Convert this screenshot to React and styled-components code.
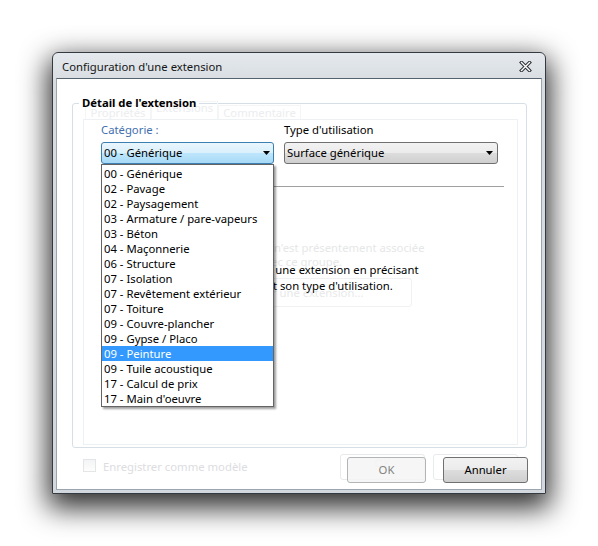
import React from "react";
import styled, { createGlobalStyle } from "styled-components";

const FS = "11.3px";

const Global = createGlobalStyle`
  html, body { margin: 0; padding: 0; background: #ffffff; }
  body {
    font-family: "Noto Sans", "Segoe UI", sans-serif;
    font-size: ${FS};
    color: #000;
  }
  * { box-sizing: border-box; }
`;

const Stage = styled.div`
  width: 598px;
  height: 546px;
  padding: 52px 0 0 52px;
  background: #fff;
  overflow: hidden;
`;

const Window = styled.div`
  width: 494px;
  height: 442px;
  border: 1px solid #343a40;
  border-radius: 6px 6px 0 0;
  background: linear-gradient(#e5e9ed, #d7dce1 30px, #d3d8de);
  box-shadow: 0 10px 28px 4px rgba(0, 0, 0, 0.82);
  display: flex;
  flex-direction: column;
  padding: 0 3px 3px 3px;
`;

const TitleBar = styled.div`
  height: 25px;
  flex: none;
  display: flex;
  align-items: center;
  justify-content: space-between;
  padding: 2px 10px 0 6px;
`;

const Title = styled.span`
  font-size: ${FS};
  line-height: 16px;
  color: #151515;
`;

const CloseGlyph = styled.svg`
  display: block;
`;

const Client = styled.div`
  flex: 1;
  min-height: 0;
  background: #fff;
  border: 1px solid #9aa5b0;
  border-top-color: #56636f;
  display: flex;
  flex-direction: column;
  padding: 16px 0 6px 0;
`;

const GroupBox = styled.fieldset`
  flex: 1;
  min-height: 0;
  margin: 0 14px 0 15px;
  padding: 0 8px 2px 10px;
  border: 1px solid #d5dfe5;
  border-radius: 3px;
  display: flex;
  flex-direction: column;
`;

const Legend = styled.legend`
  font-weight: bold;
  font-size: ${FS};
  line-height: 16px;
  padding: 0 3px;
  margin-left: -4px;
  color: #000;
  position: relative;
  z-index: 2;
`;

const TabStrip = styled.div`
  display: flex;
  align-items: flex-end;
  height: 16px;
  margin: -8px 0 0 2px;
  flex: none;
`;

const GhostTab = styled.div`
  width: ${(p) => p.$w}px;
  height: ${(p) => (p.$active ? 18 : 14)}px;
  border: 1px solid #f3f5f6;
  border-bottom: none;
  font-size: ${FS};
  line-height: ${(p) => (p.$active ? 12 : 14)}px;
  color: #ebedef;
  text-align: center;
  white-space: nowrap;
`;

const Panel = styled.div`
  flex: 1;
  min-height: 0;
  position: relative;
  border: 1px solid #eef1f3;
  padding: 2px 13px 0 17px;
  display: flex;
  flex-direction: column;
`;

const FieldGrid = styled.div`
  display: grid;
  grid-template-columns: 173px 214px;
  column-gap: 10px;
  row-gap: 4px;
  position: relative;
  z-index: 5;
`;

const FieldLabel = styled.div`
  font-size: ${FS};
  line-height: 16px;
  color: ${(p) => (p.$focus ? "#3f6fae" : "#000")};
`;

const ComboWrap = styled.div`
  position: relative;
`;

const Combo = styled.div`
  height: 22px;
  border: 1px solid ${(p) => (p.$open ? "#3c7fb1" : "#707070")};
  border-radius: 3px;
  background: ${(p) =>
    p.$open
      ? "linear-gradient(#eaf6fd 0%, #d9f0fc 50%, #bee6fd 50%, #a7d9f5 100%)"
      : "linear-gradient(#f2f2f2 0%, #ebebeb 50%, #dddddd 50%, #cfcfcf 100%)"};
  display: flex;
  align-items: center;
  justify-content: space-between;
  padding: 0 ${(p) => (p.$open ? 3 : 4)}px 0 2px;
  font-size: ${FS};
  line-height: 16px;
  white-space: nowrap;
`;

const Arrow = styled.svg`
  display: block;
  flex: none;
`;

const DropList = styled.ul`
  position: absolute;
  top: 100%;
  left: 0;
  width: 100%;
  margin: 0;
  padding: 1px 0 0 0;
  list-style: none;
  background: #fff;
  border: 1px solid #646464;
  box-shadow: 2px 2px 2px rgba(0, 0, 0, 0.38);
  z-index: 10;
`;

const DropItem = styled.li`
  height: 15px;
  line-height: 15px;
  padding-left: 2px;
  font-size: ${FS};
  white-space: nowrap;
  background: ${(p) => (p.$selected ? "#3399ff" : "transparent")};
  color: ${(p) => (p.$selected ? "#fff" : "#000")};
`;

const Separator = styled.div`
  height: 1px;
  background: #a0a0a0;
  margin-top: 22px;
  flex: none;
  position: relative;
  z-index: 2;
`;

const Description = styled.div`
  margin-top: 75px;
  margin-left: 101px;
  font-size: ${FS};
  line-height: 16px;
  color: #000;
  position: relative;
  z-index: 2;
  white-space: nowrap;
`;

const DescLine = styled.div`
  margin-left: ${(p) => p.$shift || 0}px;
`;

const GhostLayer = styled.div`
  position: absolute;
  inset: 0;
  display: flex;
  flex-direction: column;
  align-items: center;
  padding-top: 121px;
  pointer-events: none;
  z-index: 1;
`;

const GhostText = styled.div`
  font-size: ${FS};
  line-height: 14px;
  color: #e6e7e8;
  text-align: center;
  white-space: nowrap;
`;

const GhostButton = styled.div`
  margin-top: 9px;
  width: 222px;
  height: 29px;
  border: 1px solid #f0f1f2;
  border-radius: 3px;
  display: flex;
  align-items: center;
  justify-content: center;
  font-size: ${FS};
  color: #e8e9ea;
`;

const BottomRow = styled.div`
  flex: none;
  height: 26px;
  margin-top: 9px;
  padding: 0 13px 0 26px;
  display: flex;
  align-items: center;
  position: relative;
`;

const GhostActions = styled.div`
  position: absolute;
  right: 23px;
  top: -3px;
  display: flex;
  gap: 8px;
  pointer-events: none;
`;

const GhostAction = styled.div`
  width: 85px;
  height: 26px;
  border: 1px solid #e9eaeb;
  border-radius: 3px;
  font-size: ${FS};
  line-height: 16px;
  color: #e4e5e6;
  text-align: center;
`;

const CheckBox = styled.span`
  width: 13px;
  height: 13px;
  border: 1px solid #e3e5e7;
  background: linear-gradient(#f3f4f5, #fdfdfd);
  align-self: flex-start;
  margin-top: 2px;
  flex: none;
`;

const CheckLabel = styled.span`
  margin-left: 7px;
  font-size: ${FS};
  line-height: 16px;
  color: #dcdddf;
  margin-top: -6px;
`;

const Spacer = styled.div`
  flex: 1;
`;

const Button = styled.div`
  width: ${(p) => p.$w}px;
  height: 26px;
  border: 1px solid ${(p) => (p.$disabled ? "#b1b5b8" : "#707070")};
  border-radius: 3px;
  background: ${(p) =>
    p.$disabled
      ? "rgba(244, 244, 244, 0.85)"
      : "linear-gradient(#f2f2f2 0%, #ebebeb 50%, #dddddd 50%, #cfcfcf 100%)"};
  color: ${(p) => (p.$disabled ? "#838383" : "#000")};
  display: flex;
  align-items: center;
  justify-content: center;
  font-size: ${FS};
  line-height: 16px;
  margin-left: ${(p) => p.$ml || 0}px;
  position: relative;
  z-index: 2;
`;

const categories = [
  "00 - Générique",
  "02 - Pavage",
  "02 - Paysagement",
  "03 - Armature / pare-vapeurs",
  "03 - Béton",
  "04 - Maçonnerie",
  "06 - Structure",
  "07 - Isolation",
  "07 - Revêtement extérieur",
  "07 - Toiture",
  "09 - Couvre-plancher",
  "09 - Gypse / Placo",
  "09 - Peinture",
  "09 - Tuile acoustique",
  "17 - Calcul de prix",
  "17 - Main d'oeuvre",
];

const DownArrow = () => (
  <Arrow width="7" height="4" viewBox="0 0 7 4">
    <path d="M0 0H7L3.5 4Z" fill="#000" />
  </Arrow>
);

export default function App() {
  return (
    <>
      <Global />
      <Stage>
        <Window>
          <TitleBar>
            <Title>Configuration d'une extension</Title>
            <CloseGlyph width="13" height="11" viewBox="0 0 13 11">
              <path
                d="M2.5 1.5 L10.5 9.5 M10.5 1.5 L2.5 9.5"
                stroke="#2b2f33"
                strokeWidth="3.4"
                strokeLinecap="square"
              />
              <path
                d="M2.5 1.5 L10.5 9.5 M10.5 1.5 L2.5 9.5"
                stroke="#ffffff"
                strokeWidth="1.4"
                strokeLinecap="square"
              />
            </CloseGlyph>
          </TitleBar>
          <Client>
            <GroupBox>
              <Legend>Détail de l'extension</Legend>
              <TabStrip>
                <GhostTab $w={66}>Propriétés</GhostTab>
                <GhostTab $w={67} $active>
                  Extensions
                </GhostTab>
                <GhostTab $w={83}>Commentaire</GhostTab>
              </TabStrip>
              <Panel>
                <GhostLayer>
                  <GhostText>Aucune extension n'est présentement associée</GhostText>
                  <GhostText>avec ce groupe.</GhostText>
                  <GhostButton>Ajouter une extension...</GhostButton>
                </GhostLayer>
                <FieldGrid>
                  <FieldLabel $focus>Catégorie :</FieldLabel>
                  <FieldLabel>Type d'utilisation</FieldLabel>
                  <ComboWrap>
                    <Combo $open>
                      <span>00 - Générique</span>
                      <DownArrow />
                    </Combo>
                    <DropList>
                      {categories.map((c, i) => (
                        <DropItem key={i} $selected={i === 12}>
                          {c}
                        </DropItem>
                      ))}
                    </DropList>
                  </ComboWrap>
                  <ComboWrap>
                    <Combo>
                      <span>Surface générique</span>
                      <DownArrow />
                    </Combo>
                  </ComboWrap>
                </FieldGrid>
                <Separator />
                <Description>
                  <DescLine>Veuillez créer une extension en précisant</DescLine>
                  <DescLine $shift={-3}>sa catégorie et son type d'utilisation.</DescLine>
                </Description>
              </Panel>
            </GroupBox>
            <BottomRow>
              <GhostActions>
                <GhostAction>OK</GhostAction>
                <GhostAction>Annuler</GhostAction>
              </GhostActions>
              <CheckBox />
              <CheckLabel>Enregistrer comme modèle</CheckLabel>
              <Spacer />
              <Button $w={79} $disabled>
                OK
              </Button>
              <Button $w={85} $ml={17}>
                Annuler
              </Button>
            </BottomRow>
          </Client>
        </Window>
      </Stage>
    </>
  );
}
